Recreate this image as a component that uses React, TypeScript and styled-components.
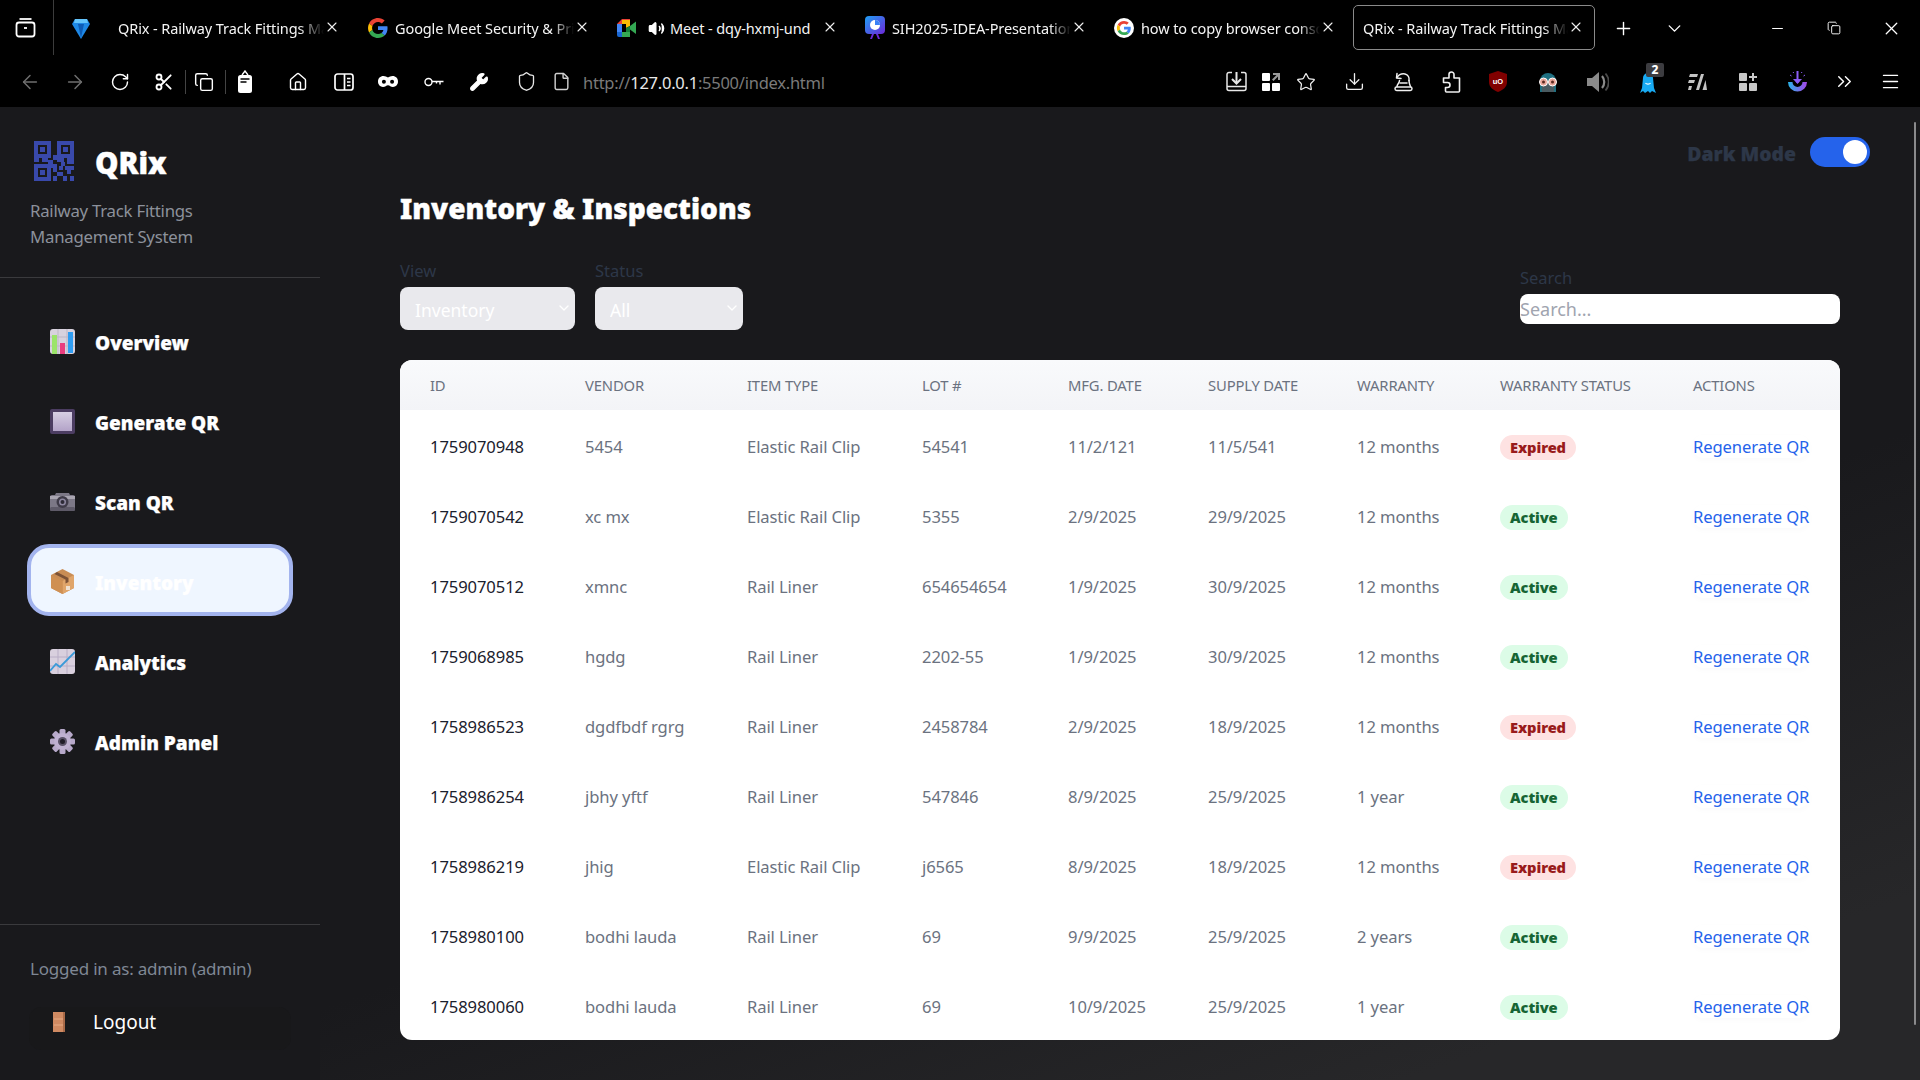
import React from "react";
import styled, { createGlobalStyle } from "styled-components";
import {
  ArrowLeft, ArrowRight, RotateCw, Scissors, Copy, House, Wrench, Shield, File, Star, Download,
  ChevronsRight, Menu, X, Plus, ChevronDown, Minus, Volume2,
} from "lucide-react";

const UI = `"Noto Sans", "Open Sans", Arial, sans-serif`;

const Global = createGlobalStyle`
  html, body { margin: 0; padding: 0; height: 100%; background: #19191c; overflow: hidden; }
  #root { height: 100%; }
  * { box-sizing: border-box; }
`;

const Page = styled.div`
  width: 1920px; height: 1080px; display: flex; flex-direction: column; position: relative;
  font-family: ${UI}; overflow: hidden;
`;

/* Browser chrome */
const Chrome = styled.header`
  height: 107px; background: #000; color: #fff; flex: none; display: flex; flex-direction: column;
`;
const TabStrip = styled.div`display: flex; height: 55px; align-items: flex-start;`;
const TabManager = styled.div`
  width: 54px; height: 55px; border-right: 1px solid #3c3c3c; display: flex; align-items: center;
  justify-content: center; padding-right: 2px; padding-bottom: 1px; flex: none;
`;
const Tab = styled.div<{ $w: number; $ml: number; $active?: boolean; $pr: number }>`
  width: ${(p) => p.$w}px; margin-left: ${(p) => p.$ml}px; height: 45px; margin-top: 5px;
  padding: 1px ${(p) => p.$pr}px 0 ${(p) => (p.$active ? 9 : 12)}px; display: flex; align-items: center; flex: none;
  border: ${(p) => (p.$active ? "1px solid #8a8a8a" : "1px solid transparent")}; border-radius: 5px;
`;
const Favicon = styled.span<{ $mr: number; $ml?: number }>`
  width: 20px; height: 20px; margin-right: ${(p) => p.$mr}px; margin-left: ${(p) => p.$ml ?? 0}px; flex: none; display: flex;
  align-items: center; justify-content: center;
`;
const TabTitle = styled.span<{ $plain?: boolean }>`
  flex: 1; min-width: 0; white-space: nowrap; overflow: hidden; font-size: 14.5px; color: #f4f4f4;
  letter-spacing: -0.1px; padding-bottom: 1px;
  ${(p) =>
    !p.$plain &&
    `-webkit-mask-image: linear-gradient(90deg, #000 88%, transparent 100%);
     mask-image: linear-gradient(90deg, #000 88%, transparent 100%);`}
`;
const TabClose = styled.span`display: flex; flex: none; width: 16px; justify-content: center; margin-top: -2px;`;
const StripButton = styled.span<{ $w: number; $ml?: number }>`
  width: ${(p) => p.$w}px; margin-left: ${(p) => p.$ml ?? 0}px; height: 50px; display: flex; align-items: center;
  justify-content: center; flex: none; margin-top: 3px;
`;
const ToolRow = styled.div`display: flex; height: 52px; align-items: center; padding: 1px 10px 0 8px;`;
const Slot = styled.span<{ $w: number }>`
  width: ${(p) => p.$w}px; height: 36px; display: flex; align-items: center; justify-content: center;
  flex: none; position: relative;
`;
const ToolSep = styled.span`width: 1px; height: 24px; background: #444; flex: none;`;
const ToolGap = styled.span`width: 3px; flex: none;`;
const Url = styled.div`font-size: 16.5px; color: #7a7a7a; letter-spacing: -0.25px; margin-left: 2px; flex: 1; padding-top: 1px;`;
const UrlHost = styled.span`color: #e8e8e8;`;
const Badge2 = styled.span`
  position: absolute; left: 24px; top: -1px; width: 18px; height: 14px; background: #3c3c40; border-radius: 2px;
  color: #fff; font: 800 12px/14px ${UI}; text-align: center;
`;

/* Body */
const Body = styled.div`flex: 1; display: flex; min-height: 0;`;
const Sidebar = styled.aside`
  width: 320px; flex: none; background: #19191c; display: flex; flex-direction: column;
`;
const Brand = styled.div`height: 171px; padding: 34px 30px 0; border-bottom: 1px solid #3a3a3d; flex: none;`;
const BrandRow = styled.div`display: flex; align-items: center; gap: 21px; padding-left: 4px;`;
const BrandName = styled.h1`
  margin: 0; padding-top: 4px; font: 900 29.5px/36px ${UI}; color: #fff; -webkit-text-stroke: 0.4px #fff;
`;
const BrandSub = styled.p`
  margin: 17px 0 0; font-size: 16.8px; line-height: 26px; color: #8c919b; letter-spacing: -0.25px;
`;
const Nav = styled.nav`display: flex; flex-direction: column; gap: 8px; padding: 26px 27px 0;`;
const NavItem = styled.a<{ $active?: boolean }>`
  height: 72px; display: flex; align-items: center; padding-left: 23px; gap: 20px; border-radius: 22px;
  font: 900 19px/1 ${UI}; color: #fff; -webkit-text-stroke: 0.25px #fff;
  ${(p) => p.$active && `background: #eff6ff; border: 4px solid #a3b4ee; padding-left: 19px;`}
`;
const NavText = styled.span`padding-top: 6px;`;
const NavIcon = styled.span`
  width: 25px; height: 25px; margin-top: 3px; display: flex; align-items: center; justify-content: center; flex: none;
`;
const SideFooter = styled.div`
  margin-top: auto; height: 156px; border-top: 1px solid #3a3a3d; padding: 32px 29px 0 30px; flex: none;
`;
const LoggedIn = styled.div`font-size: 17px; line-height: 24px; color: #7f8794; letter-spacing: -0.2px;`;
const Logout = styled.a`
  margin: 26px 0 0 -1px; height: 43px; display: flex; align-items: center; gap: 28px; padding: 0 0 13px 24px;
  border-radius: 12px; background: #18181a; color: #fff; font-size: 19px;
`;

const Main = styled.main`
  flex: 1; min-width: 0; padding: 30px 80px 0; display: flex; flex-direction: column;
  background: linear-gradient(160deg, #19191c 58%, #272729 88%);
`;
const ThemeBar = styled.div`
  display: flex; justify-content: flex-end; align-items: center; gap: 14px; margin-right: -30px; height: 30px; flex: none;
`;
const ThemeLabel = styled.span`
  font: 900 19.4px/1 ${UI}; color: #2d3748; padding-top: 3px; -webkit-text-stroke: 0.25px #2d3748;
`;
const Toggle = styled.span`
  width: 60px; height: 30px; border-radius: 15px; background: #2563eb; padding: 3px 3px 3px 33px; display: block;
`;
const Knob = styled.span`display: block; width: 24px; height: 24px; border-radius: 50%; background: #fff;`;
const Title = styled.h2`
  margin: 20px 0 1px; font: 900 28px/42px ${UI}; color: #fff; -webkit-text-stroke: 0.4px #fff;
`;
const Filters = styled.div`
  margin-top: 30px; display: flex; align-items: center; gap: 20px; height: 70px; flex: none;
`;
const Field = styled.label`display: flex; flex-direction: column; gap: 5px;`;
const SearchField = styled(Field)`margin-left: auto; width: 320px;`;
const FieldLabel = styled.span`font-size: 16.5px; line-height: 22px; color: #2d3748;`;
const SelectWrap = styled.span<{ $w: number }>`position: relative; display: block; width: ${(p) => p.$w}px;`;
const Select = styled.select`
  appearance: none; width: 100%; height: 43px; border: 0; border-radius: 8px; background: #e9e9ed; color: #fff;
  font: 17.5px ${UI}; padding: 2px 0 0 15px; outline: 0;
`;
const SelectChevron = styled.span`
  position: absolute; right: 3px; top: 13px; color: #fff; display: flex; pointer-events: none;
`;
const Search = styled.input`
  width: 100%; height: 30px; border: 0; border-radius: 8px; background: #fff; padding: 0; outline: 0;
  font: 18px ${UI}; &::placeholder { color: #a0a4af; }
`;
const Card = styled.section`
  margin-top: 30px; background: #fff; border-radius: 12px; overflow: hidden; flex: none;
`;
const Table = styled.table`width: 1440px; table-layout: fixed; border-collapse: collapse;`;
const HeadRow = styled.tr`height: 50px; background: linear-gradient(180deg, #f9fafc, #f3f4f7);`;
const Th = styled.th`
  padding: 0 0 0 30px; text-align: left; font-size: 14.8px; font-weight: 400; color: #6b7280; letter-spacing: -0.15px;
  text-transform: uppercase; white-space: nowrap;
`;
const Row = styled.tr`height: 70px;`;
const Td = styled.td<{ $strong?: boolean }>`
  padding: 2px 0 0 30px; font-size: 16.6px; color: ${(p) => (p.$strong ? "#1a202c" : "#6b7280")}; white-space: nowrap;
  letter-spacing: -0.1px;
`;
const Status = styled.span<{ $expired: boolean }>`
  display: inline-flex; align-items: center; height: 25px; padding: 0 10px; border-radius: 13px; margin-top: 3px;
  font: 900 14.7px/1 ${UI};
  color: ${(p) => (p.$expired ? "#991b1b" : "#166534")}; background: ${(p) => (p.$expired ? "#fee2e2" : "#dcfce7")};
`;
const Regen = styled.a`
  color: #2563eb; font-size: 16.6px; letter-spacing: -0.1px; display: inline-block; border-radius: 10px;
  box-shadow: 0 2px 6px rgba(30, 40, 80, 0.025);
`;
const Scrollbar = styled.span`
  position: absolute; left: 1914px; top: 122px; width: 2px; height: 903px; background: #8a8a8c; border-radius: 1px;
`;

/* Drawn icons */
const QR_BLOCKS = [
  [8, 17, 6, 4], [19, 14, 4, 5], [14, 19, 5, 4], [23, 17, 7, 4], [33, 17, 7, 6], [17, 23, 6, 4], [27, 21, 4, 4],
  [19, 27, 4, 4], [25, 25, 4, 4], [31, 25, 9, 4], [25, 31, 4, 4], [33, 29, 4, 4], [19, 35, 4, 5], [29, 35, 4, 5],
  [36, 35, 4, 5], [23, 31, 2, 4], [0, 17, 5, 4],
];
const QrFinder = ({ x, y }: { x: number; y: number }) => (
  <g>
    <rect x={x} y={y} width="17" height="17" rx="0.5" fill="#3949ab" />
    <rect x={x + 4} y={y + 4} width="9" height="9" fill="#19191c" />
    <rect x={x + 6} y={y + 6} width="5" height="5" fill="#3949ab" />
  </g>
);
const QrLogo = () => (
  <svg width="40" height="40" viewBox="0 0 40 40" shapeRendering="crispEdges">
    <QrFinder x={0} y={0} /><QrFinder x={23} y={0} /><QrFinder x={0} y={23} />
    {QR_BLOCKS.map(([x, y, w, h], i) => <rect key={i} x={x} y={y} width={w} height={h} fill="#3949ab" />)}
  </svg>
);
const TabMgrIcon = () => (
  <svg width="21" height="21" viewBox="0 0 21 21" fill="none" stroke="#fff" strokeWidth="1.8">
    <rect x="1.5" y="5.5" width="18" height="14" rx="2.5" />
    <path d="M4.5 2h12" /><path d="M9 11h3" />
  </svg>
);
const Diamond = () => (
  <svg width="18" height="21" viewBox="0 0 18 21">
    <path d="M3 1h12l3 5-9 15L0 6z" fill="#1e88e5" />
    <path d="M3 1h12l1 4H2z" fill="#64c4fb" />
    <path d="M6 6h6l-3 14z" fill="#0d5bb5" />
  </svg>
);
const GoogleG = ({ ring }: { ring?: boolean }) => (
  <svg width="20" height="20" viewBox="0 0 48 48">
    {ring && <circle cx="24" cy="24" r="24" fill="#fff" />}
    <g transform={ring ? "translate(7 7) scale(.71)" : undefined}>
      <path fill="#EA4335" d="M24 9.5c3.5 0 6.7 1.3 9.2 3.4l6.8-6.8C35.9 2.400 30.500 0 24 0 14.600 0 6.500 5.400 2.600 13.200l8 6.200C12.500 13.700 17.800 9.500 24 9.500z" />
      <path fill="#4285F4" d="M46.900 24.500c0-1.600-.2-3.100-.4-4.500H24v9h12.900c-.6 3-2.300 5.500-4.800 7.200l7.700 6c4.500-4.200 7.100-10.300 7.100-17.700z" />
      <path fill="#FBBC05" d="M10.600 28.600c-.5-1.400-.8-3-.8-4.600s.3-3.200.8-4.600l-8-6.200C.9 16.500 0 20.100 0 24s.9 7.500 2.600 10.800z" />
      <path fill="#34A853" d="M24 48c6.500 0 11.900-2.100 15.900-5.800l-7.700-6c-2.200 1.400-4.900 2.300-8.100 2.300-6.200 0-11.500-4.200-13.400-9.900l-8 6.200C6.500 42.600 14.600 48 24 48z" />
    </g>
  </svg>
);
const MeetIcon = () => (
  <svg width="20" height="18" viewBox="0 0 20 18">
    <path d="M0 5l5-5h8v5z" fill="#ea4335" /><path d="M0 5h5v8H0z" fill="#4285f4" />
    <path d="M0 13h5v5H2a2 2 0 0 1-2-2z" fill="#1967d2" /><path d="M5 13h8v5H5z" fill="#34a853" />
    <path d="M13 1v6l-4 2V5H5V1z" fill="#fbbc05" />
    <path d="M13 7l6-4.500v12.500l-6-4.500z" fill="#34a853" /><path d="M9 9l4-2v6H9z" fill="#188038" />
  </svg>
);
const SihIcon = () => (
  <svg width="20" height="24" viewBox="0 0 20 24">
    <defs><linearGradient id="sih" x1="0" y1="0" x2="1" y2="1"><stop offset="0" stopColor="#1ea0f5" /><stop offset="1" stopColor="#6d28d9" /></linearGradient></defs>
    <rect width="20" height="18" rx="4" fill="url(#sih)" />
    <path d="M7 18l-2 5h2l2-5zM13 18l2 5h-2l-2-5z" fill="#6d28d9" />
    <circle cx="10" cy="9" r="5" fill="#fff" /><path d="M10 9V4a5 5 0 0 1 5 5z" fill="#3b82f6" />
  </svg>
);
const ClipboardIcon = () => (
  <svg width="16" height="24" viewBox="0 0 16 24" fill="none">
    <path d="M5 5l3-4 3 4" stroke="#fff" strokeWidth="1.4" />
    <rect x="1" y="5" width="14" height="18" rx="2.500" fill="#fff" />
    <path d="M3.500 9h9M3.500 12h6" stroke="#000" strokeWidth="1.500" />
  </svg>
);
const ReaderIcon = () => (
  <svg width="20" height="18" viewBox="0 0 20 18" fill="none" stroke="#fff" strokeWidth="1.700">
    <rect x="1" y="1" width="18" height="16" rx="2.500" /><path d="M10.500 1v16M13 5.500h3.500M13 9h3.500M13 12.500h3.500" />
  </svg>
);
const MaskIcon = () => (
  <svg width="20" height="13" viewBox="0 0 22 14">
    <path fillRule="evenodd" fill="#fff" d="M6 1c2 0 3.500 1 5 1.500C12.500 2 14 1 16 1c3.500 0 6 2.500 6 6s-2.500 6-5.500 6c-2.500 0-3.500-2-5.500-2s-3 2-5.500 2C2.500 13 0 10.500 0 7s2.500-6 6-6zM6.500 5a2.200 2.200 0 1 0 0 4.400 2.200 2.200 0 0 0 0-4.400zm9 0a2.200 2.200 0 1 0 0 4.400 2.200 2.200 0 0 0 0-4.400z" />
  </svg>
);
const KeyIcon = () => (
  <svg width="20" height="12" viewBox="0 0 20 12" fill="none" stroke="#fff" strokeWidth="1.400">
    <circle cx="4.500" cy="6" r="3.500" /><path d="M8 5.500h11.500M16 5.500v3M12.500 5.500v2" />
  </svg>
);
const SaveIcon = () => (
  <svg width="21" height="21" viewBox="0 0 21 21" fill="none" stroke="#e8e8e8" strokeWidth="1.500">
    <path d="M6 1.500H3A2 2 0 0 0 1 3.500v14a2 2 0 0 0 2 2h15a2 2 0 0 0 2-2v-14a2 2 0 0 0-2-2h-3" />
    <path d="M1 15.500h19" /><path d="M10.500 1v10" strokeWidth="2" /><path d="M6 8l4.500 4.500L15 8" strokeWidth="2" />
  </svg>
);
const TilesIcon = ({ plus }: { plus?: boolean }) => (
  <svg width="18" height="18" viewBox="0 0 18 18" fill={plus ? "#c8c8c8" : "#fff"}>
    <rect width="8" height="8" rx="1" /><rect y="10" width="8" height="8" rx="1" /><rect x="10" y="10" width="8" height="8" rx="1" />
    {plus ? <path d="M13 0h2v3h3v2h-3v3h-2V5h-3V3h3z" /> : <path d="M11 0h7v7h-2V3.500L11.500 8 10 6.500 14.500 2H11z" fill="#999" />}
  </svg>
);
const HatIcon = () => (
  <svg width="19" height="20" viewBox="0 0 19 20" fill="none" stroke="#f0f0f0" strokeWidth="1.500" strokeLinejoin="round" strokeLinecap="round">
    <path d="M3 1.500L2.500 6l4.500.5" /><path d="M3 5.500C5 2.500 8 1.500 11 2c3 .7 4.500 3.500 4 6.500" />
    <path d="M5.500 8.500c0 3-2.500 3.500-2.500 6M15 8.500c0 3 1 4.500 1.500 6" />
    <path d="M6 11h7" /><rect x="1" y="15" width="17" height="3.500" rx="1.700" />
  </svg>
);
const PuzzleIcon = () => (
  <svg width="20" height="22" viewBox="0 0 20 22" fill="none" stroke="#f0f0f0" strokeWidth="1.600" strokeLinejoin="round">
    <path d="M8 3.500a2.500 2.500 0 0 1 5 0V7h5.500v13a1 1 0 0 1-1 1H5.500a1 1 0 0 1-1-1v-3.500h2a2.500 2.500 0 0 0 0-5h-4V7H8z" />
  </svg>
);
const GraySpeaker = () => (
  <svg width="22" height="24" viewBox="0 0 22 24" fill="none">
    <path d="M0 8h5l7-6v20l-7-6H0z" fill="#8a8a8a" />
    <path d="M15 6c3 3.500 3 8.500 0 12" stroke="#8a8a8a" strokeWidth="2.200" />
    <path d="M18.500 3.500c4.300 5 4.300 12 0 17" stroke="#4a4a4a" strokeWidth="1.800" />
  </svg>
);
const UBlock = () => (
  <svg width="18" height="21" viewBox="0 0 18 21">
    <path d="M9 0l9 3v8c0 5-4 8-9 10-5-2-9-5-9-10V3z" fill="#800000" />
    <text x="9" y="13" fill="#fff" fontSize="7.500" fontWeight="700" textAnchor="middle" fontFamily="Liberation Sans, sans-serif">uO</text>
  </svg>
);
const Goggles = () => (
  <svg width="20" height="21" viewBox="0 0 20 21">
    <path d="M2 10a8 8 0 0 1 16 0v11H2z" fill="#1f6f80" />
    <rect x="4" y="11" width="12" height="10" fill="#4a5a60" />
    <circle cx="5.500" cy="11" r="4" fill="#e9a598" stroke="#fff" /><circle cx="14.500" cy="11" r="4" fill="#e9a598" stroke="#fff" />
    <circle cx="5.500" cy="11" r="1.500" fill="#5a2b22" /><circle cx="14.500" cy="11" r="1.500" fill="#5a2b22" />
  </svg>
);
const Ghost = () => (
  <svg width="16" height="23" viewBox="0 0 16 23">
    <path d="M3 8a5 5 0 0 1 10 0l1 10 2 5-4-2-2 2-2-2-3 2-2-2-3 2 2-5z" fill="#18aaf2" />
    <path d="M5.500 13c1 1.500 4 1.500 5 0" stroke="#fff" fill="none" strokeWidth="1.200" />
  </svg>
);
const SlashBars = () => (
  <svg width="19" height="18" viewBox="0 0 19 18" fill="#c4c4c4">
    <path d="M2 1h8l-1 3H1zM1 7h6l-1 3H0zM1 13h3l-1 4H0zM8 17l5-16h3L11 17zM14.500 17l3-10 1.500 10z" />
  </svg>
);
const ArcDown = () => (
  <svg width="21" height="23" viewBox="0 0 21 23" fill="none">
    <defs><linearGradient id="arc" x1="0" y1="0" x2="1" y2="0"><stop offset="0" stopColor="#28b5e8" /><stop offset="1" stopColor="#a743e8" /></linearGradient></defs>
    <path d="M1 12a9.500 9.500 0 0 0 19 0h-4.500a5 5 0 0 1-10 0z" fill="url(#arc)" />
    <path d="M10.500 1v12" stroke="#8b5cf6" strokeWidth="2" /><path d="M6 9l4.500 5L15 9z" fill="#8b5cf6" />
    <path d="M3 5l1.500 1M18 5l-1.500 1M6 2l.7 1M15 2l-.7 1" stroke="#8b5cf6" />
  </svg>
);

const ChartEmoji = () => (
  <svg width="25" height="25" viewBox="0 0 25 25">
    <rect width="25" height="25" rx="3" fill="#d8d2de" />
    <path d="M8 0v25M17 0v25M0 8h25M0 17h25" stroke="#bdb6c6" />
    <rect x="2" y="6" width="5" height="19" fill="#9be46a" /><rect x="10" y="14" width="5" height="11" fill="#ea3d7e" />
    <rect x="18" y="3" width="5" height="21" fill="#2f9df2" />
  </svg>
);
const SquareEmoji = () => (
  <svg width="25" height="25" viewBox="0 0 25 25">
    <defs><linearGradient id="sq" x1="0" y1="0" x2="0" y2="1"><stop offset="0" stopColor="#d7cfe3" /><stop offset="1" stopColor="#b3a3c8" /></linearGradient></defs>
    <rect width="25" height="25" rx="2" fill="#4c3d62" /><rect x="3" y="3" width="19" height="19" fill="url(#sq)" />
  </svg>
);
const CameraEmoji = () => (
  <svg width="25" height="19" viewBox="0 0 25 19">
    <path d="M0 5a2 2 0 0 1 2-2h3l1-2h13l1 2h3a2 2 0 0 1 2 2v12a2 2 0 0 1-2 2H2a2 2 0 0 1-2-2z" fill="#7c7886" />
    <rect y="4" width="25" height="3" fill="#a9a5b1" /><rect y="15" width="25" height="4" rx="1.500" fill="#5e5a68" />
    <circle cx="12.500" cy="10" r="6" fill="#3f3b48" /><circle cx="12.500" cy="10" r="3.500" fill="#8e88a0" /><circle cx="12.500" cy="10" r="2" fill="#2d2a35" />
  </svg>
);
const BoxEmoji = () => (
  <svg width="23" height="25" viewBox="0 0 23 25">
    <path d="M11.500 0L23 6v13l-11.500 6L0 19V6z" fill="#c98d55" />
    <path d="M11.500 12L23 6v13l-11.500 6z" fill="#e0a56a" /><path d="M11.500 12L0 6v13l11.500 6z" fill="#cf9053" />
    <path d="M6 3l11.500 6v4l-3 1.500v-4L3.500 5z" fill="#7c5236" /><rect x="15" y="17" width="4" height="4" fill="#efe0d0" />
  </svg>
);
const TrendEmoji = () => (
  <svg width="25" height="25" viewBox="0 0 25 25">
    <rect width="25" height="25" rx="3" fill="#d9d0de" />
    <path d="M8 0v25M17 0v25M0 8h25M0 17h25" stroke="#b9aec6" />
    <path d="M0 22l6-7 4 3L25 3" fill="none" stroke="#3a9ad8" strokeWidth="1.800" />
  </svg>
);
const GearEmoji = () => (
  <svg width="25" height="25" viewBox="0 0 25 25">
    {[0, 45, 90, 135].map((a) => (
      <rect key={a} x="9.500" y="0" width="6" height="25" rx="1.500" fill="#b7a9ca" transform={`rotate(${a} 12.500 12.500)`} />
    ))}
    <circle cx="12.500" cy="12.500" r="8.500" fill="#bfb1d2" /><circle cx="12.500" cy="12.500" r="4.500" fill="#5a5268" /><circle cx="12.500" cy="12.500" r="2.500" fill="#1f1c28" />
  </svg>
);
const DoorEmoji = () => (
  <svg width="12" height="20" viewBox="0 0 12 20">
    <rect width="12" height="20" fill="#d08a62" /><rect width="2" height="20" x="10" fill="#a96a48" />
    <path d="M1 7h9M1 13h9" stroke="#e7ab84" />
  </svg>
);

type Rec = { id: string; vendor: string; type: string; lot: string; mfg: string; supply: string; warranty: string; status: "Expired" | "Active" };
const RECS: Rec[] = [
  { id: "1759070948", vendor: "5454", type: "Elastic Rail Clip", lot: "54541", mfg: "11/2/121", supply: "11/5/541", warranty: "12 months", status: "Expired" },
  { id: "1759070542", vendor: "xc mx", type: "Elastic Rail Clip", lot: "5355", mfg: "2/9/2025", supply: "29/9/2025", warranty: "12 months", status: "Active" },
  { id: "1759070512", vendor: "xmnc", type: "Rail Liner", lot: "654654654", mfg: "1/9/2025", supply: "30/9/2025", warranty: "12 months", status: "Active" },
  { id: "1759068985", vendor: "hgdg", type: "Rail Liner", lot: "2202-55", mfg: "1/9/2025", supply: "30/9/2025", warranty: "12 months", status: "Active" },
  { id: "1758986523", vendor: "dgdfbdf rgrg", type: "Rail Liner", lot: "2458784", mfg: "2/9/2025", supply: "18/9/2025", warranty: "12 months", status: "Expired" },
  { id: "1758986254", vendor: "jbhy yftf", type: "Rail Liner", lot: "547846", mfg: "8/9/2025", supply: "25/9/2025", warranty: "1 year", status: "Active" },
  { id: "1758986219", vendor: "jhig", type: "Elastic Rail Clip", lot: "j6565", mfg: "8/9/2025", supply: "18/9/2025", warranty: "12 months", status: "Expired" },
  { id: "1758980100", vendor: "bodhi lauda", type: "Rail Liner", lot: "69", mfg: "9/9/2025", supply: "25/9/2025", warranty: "2 years", status: "Active" },
  { id: "1758980060", vendor: "bodhi lauda", type: "Rail Liner", lot: "69", mfg: "10/9/2025", supply: "25/9/2025", warranty: "1 year", status: "Active" },
];
const COLS = [155, 162, 175, 146, 140, 149, 143, 193, 177];
const HEADS = ["ID", "Vendor", "Item Type", "Lot #", "Mfg. Date", "Supply Date", "Warranty", "Warranty Status", "Actions"];
const NAV = [
  { label: "Overview", icon: <ChartEmoji /> },
  { label: "Generate QR", icon: <SquareEmoji /> },
  { label: "Scan QR", icon: <CameraEmoji /> },
  { label: "Inventory", icon: <BoxEmoji />, active: true },
  { label: "Analytics", icon: <TrendEmoji /> },
  { label: "Admin Panel", icon: <GearEmoji /> },
];

const ic = { size: 20, color: "#fff", strokeWidth: 1.7 };
const closeIc = { size: 18, color: "#f0f0f0", strokeWidth: 1.6 };

export default function App() {
  return (
    <Page>
      <Global />
      <Chrome>
        <TabStrip>
          <TabManager><TabMgrIcon /></TabManager>
          <Tab $w={284} $ml={6} $pr={3}>
            <Favicon $mr={27} $ml={-2}><Diamond /></Favicon><TabTitle>QRix - Railway Track Fittings Management</TabTitle><TabClose><X {...closeIc} /></TabClose>
          </Tab>
          <Tab $w={238} $ml={11} $pr={2}>
            <Favicon $mr={7}><GoogleG /></Favicon><TabTitle>Google Meet Security &amp; Privacy</TabTitle><TabClose><X {...closeIc} /></TabClose>
          </Tab>
          <Tab $w={237} $ml={12} $pr={3}>
            <Favicon $mr={9} $ml={-1}><MeetIcon /></Favicon><Favicon $mr={4}><Volume2 size={17} color="#fff" fill="#fff" /></Favicon>
            <TabTitle $plain>Meet - dqy-hxmj-und</TabTitle><TabClose><X {...closeIc} /></TabClose>
          </Tab>
          <Tab $w={237} $ml={11} $pr={2}>
            <Favicon $mr={7} $ml={-1}><SihIcon /></Favicon><TabTitle>SIH2025-IDEA-Presentation-Format</TabTitle><TabClose><X {...closeIc} /></TabClose>
          </Tab>
          <Tab $w={238} $ml={12} $pr={3}>
            <Favicon $mr={7} $ml={-1}><GoogleG ring /></Favicon><TabTitle>how to copy browser console output</TabTitle><TabClose><X {...closeIc} /></TabClose>
          </Tab>
          <Tab $w={242} $ml={13} $pr={10} $active>
            <TabTitle>QRix - Railway Track Fittings Management</TabTitle><TabClose><X {...closeIc} /></TabClose>
          </Tab>
          <StripButton $w={40} $ml={8}><Plus size={21} color="#fff" strokeWidth={1.6} /></StripButton>
          <StripButton $w={40} $ml={11}><ChevronDown size={21} color="#fff" strokeWidth={1.6} /></StripButton>
          <StripButton $w={40} $ml={63}><Minus size={17} color="#fff" strokeWidth={1.4} /></StripButton>
          <StripButton $w={40} $ml={17}><Copy size={14} color="#fff" strokeWidth={1.6} /></StripButton>
          <StripButton $w={40} $ml={17}><X size={21} color="#fff" strokeWidth={1.5} /></StripButton>
        </TabStrip>
        <ToolRow>
          <Slot $w={44}><ArrowLeft size={22} color="#6f6f6f" strokeWidth={1.6} /></Slot>
          <Slot $w={46}><ArrowRight size={22} color="#6f6f6f" strokeWidth={1.6} /></Slot>
          <Slot $w={44}><RotateCw {...ic} /></Slot>
          <Slot $w={43}><Scissors size={20} color="#fff" strokeWidth={2.2} /></Slot>
          <ToolSep />
          <Slot $w={36}><Copy {...ic} /></Slot>
          <ToolGap /><ToolSep />
          <Slot $w={37}><ClipboardIcon /></Slot>
          <Slot $w={70}><House {...ic} /></Slot>
          <Slot $w={22}><ReaderIcon /></Slot>
          <Slot $w={66}><MaskIcon /></Slot>
          <Slot $w={25}><KeyIcon /></Slot>
          <Slot $w={65}><Wrench size={20} color="#fff" fill="#fff" strokeWidth={1.5} /></Slot>
          <Slot $w={30}><Shield size={21} color="#e8e8e8" strokeWidth={1.5} /></Slot>
          <Slot $w={40}><File size={19} color="#d0d0d0" strokeWidth={1.8} /></Slot>
          <Url>http://<UrlHost>127.0.0.1</UrlHost>:5500/index.html</Url>
          <Slot $w={48}><SaveIcon /></Slot>
          <Slot $w={22}><TilesIcon /></Slot>
          <Slot $w={48}><Star size={20} color="#f0f0f0" strokeWidth={1.5} /></Slot>
          <Slot $w={48}><Download size={21} color="#f0f0f0" strokeWidth={1.5} /></Slot>
          <Slot $w={50}><HatIcon /></Slot>
          <Slot $w={46}><PuzzleIcon /></Slot>
          <Slot $w={48}><UBlock /></Slot>
          <Slot $w={52}><Goggles /></Slot>
          <Slot $w={48}><GraySpeaker /></Slot>
          <Slot $w={52}><Ghost /><Badge2>2</Badge2></Slot>
          <Slot $w={46}><SlashBars /></Slot>
          <Slot $w={56}><TilesIcon plus /></Slot>
          <Slot $w={42}><ArcDown /></Slot>
          <Slot $w={52}><ChevronsRight size={23} color="#fff" strokeWidth={1.5} /></Slot>
          <Slot $w={40}><Menu size={21} color="#fff" strokeWidth={1.6} /></Slot>
        </ToolRow>
      </Chrome>
      <Body>
        <Sidebar>
          <Brand>
            <BrandRow><QrLogo /><BrandName>QRix</BrandName></BrandRow>
            <BrandSub>Railway Track Fittings<br />Management System</BrandSub>
          </Brand>
          <Nav>
            {NAV.map((n) => (
              <NavItem key={n.label} $active={n.active}><NavIcon>{n.icon}</NavIcon><NavText>{n.label}</NavText></NavItem>
            ))}
          </Nav>
          <SideFooter>
            <LoggedIn>Logged in as: admin (admin)</LoggedIn>
            <Logout><DoorEmoji />Logout</Logout>
          </SideFooter>
        </Sidebar>
        <Main>
          <ThemeBar><ThemeLabel>Dark Mode</ThemeLabel><Toggle><Knob /></Toggle></ThemeBar>
          <Title>Inventory &amp; Inspections</Title>
          <Filters>
            <Field>
              <FieldLabel>View</FieldLabel>
              <SelectWrap $w={175}>
                <Select defaultValue="Inventory"><option>Inventory</option><option>Inspections</option></Select>
                <SelectChevron><ChevronDown size={16} strokeWidth={2} /></SelectChevron>
              </SelectWrap>
            </Field>
            <Field>
              <FieldLabel>Status</FieldLabel>
              <SelectWrap $w={148}>
                <Select defaultValue="All"><option>All</option><option>Active</option><option>Expired</option></Select>
                <SelectChevron><ChevronDown size={16} strokeWidth={2} /></SelectChevron>
              </SelectWrap>
            </Field>
            <SearchField>
              <FieldLabel>Search</FieldLabel>
              <Search placeholder="Search..." />
            </SearchField>
          </Filters>
          <Card>
            <Table>
              <colgroup>{COLS.map((c, i) => <col key={i} style={{ width: c }} />)}</colgroup>
              <thead><HeadRow>{HEADS.map((h) => <Th key={h}>{h}</Th>)}</HeadRow></thead>
              <tbody>
                {RECS.map((r) => (
                  <Row key={r.id}>
                    <Td $strong>{r.id}</Td><Td>{r.vendor}</Td><Td>{r.type}</Td><Td>{r.lot}</Td>
                    <Td>{r.mfg}</Td><Td>{r.supply}</Td><Td>{r.warranty}</Td>
                    <Td><Status $expired={r.status === "Expired"}>{r.status}</Status></Td>
                    <Td><Regen>Regenerate QR</Regen></Td>
                  </Row>
                ))}
              </tbody>
            </Table>
          </Card>
        </Main>
      </Body>
      <Scrollbar />
    </Page>
  );
}
